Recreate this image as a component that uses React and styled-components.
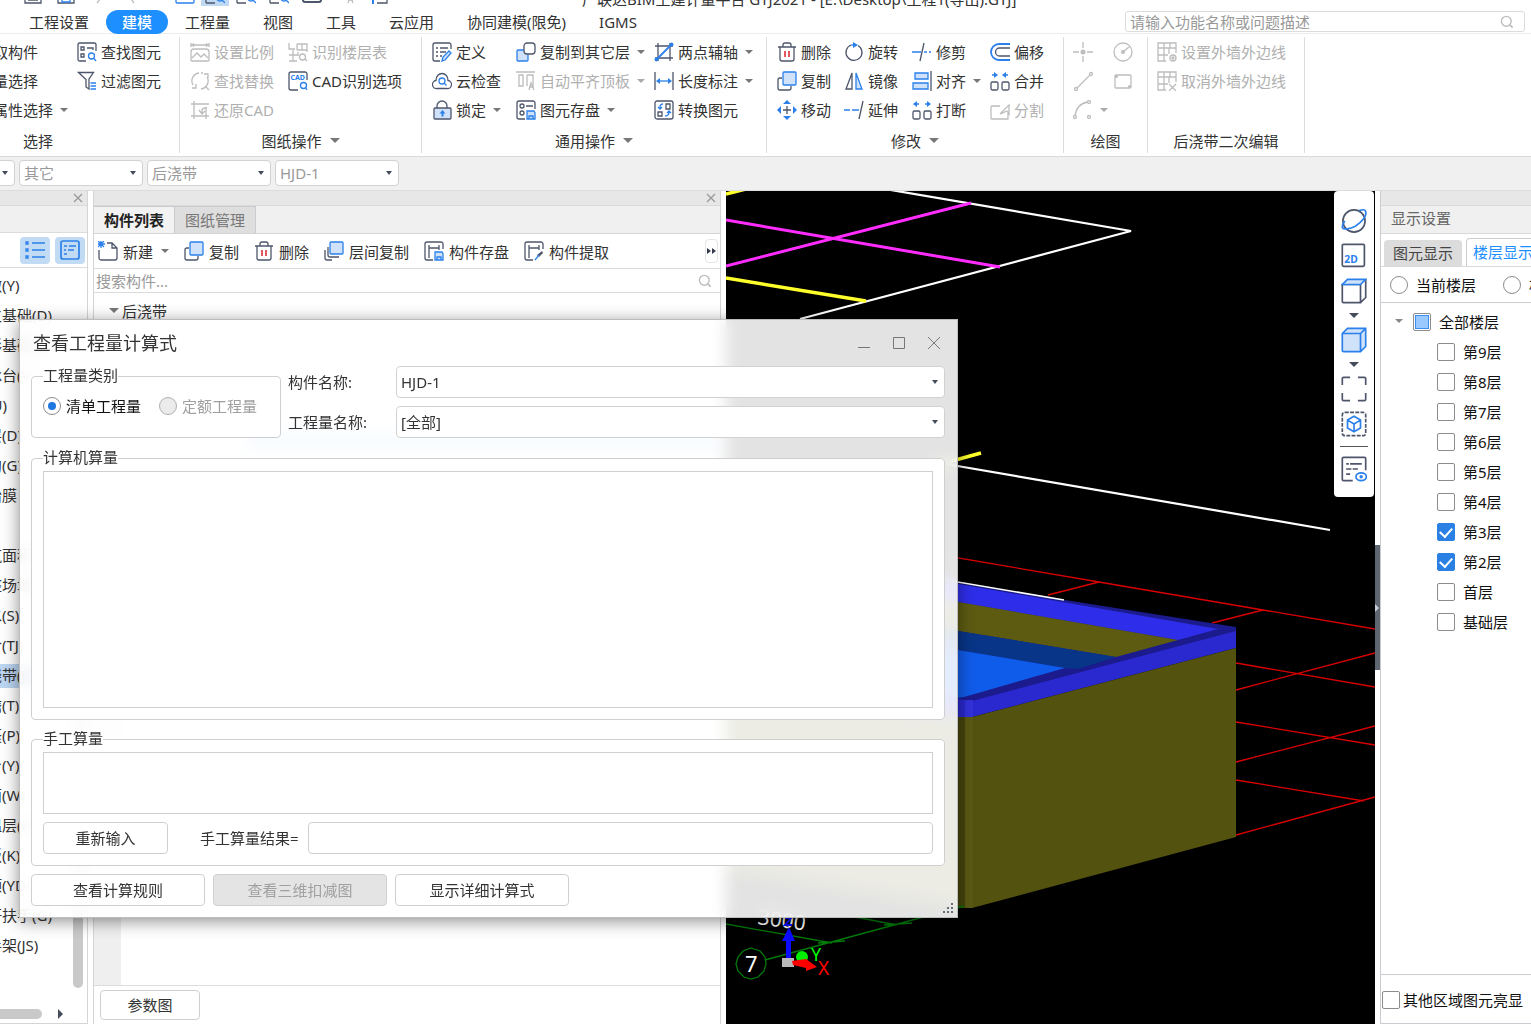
import React, { useEffect, useRef, useState } from "react";
import styled, { createGlobalStyle } from "styled-components";

const GlobalStyle = createGlobalStyle`
  * {
    box-sizing: border-box;
  }
  body {
    margin: 0;
    overflow: hidden;
  }
  body, button, input, select, textarea {
    font-family: "Noto Sans", "Noto Sans CJK SC", sans-serif;
    font-size: 15px;
    color: #333;
  }
  button {
    padding: 0;
    border: none;
    background-color: transparent;
    white-space: nowrap;
  }
`;

const Page = styled.div`
  display: flex;
  flex-direction: column;
  height: 100vh;
  overflow: hidden;
  background-color: white;
`;

/* icons, all drawn on a 20x20 grid */
const IconSvg = styled.svg`
  flex: none;
  fill: none;
  stroke: currentColor;
  stroke-width: 1.3;
  color: ${(p) => (p.$off ? "#bdbdbd" : "#4d566b")};
  .a {
    stroke: ${(p) => (p.$off ? "currentColor" : "#2b80ea")};
  }
  .f {
    fill: ${(p) => (p.$off ? "none" : "#cfe2fa")};
  }
  .s {
    fill: currentColor;
    stroke: none;
  }
  .as {
    fill: ${(p) => (p.$off ? "currentColor" : "#2b80ea")};
    stroke: none;
  }
  .r {
    stroke: #e0202c;
  }
`;

const brick = (
  <path d="M9 19H1V1h18v10M1 6h18M1 13h10M7 1v5M12 6v6M13 1v5M7 6v13" />
);

const icons = {
  find: (
    <>
      <path d="M19 9V2.500a1.500 1.500 0 0 0-1.500-1.500h-15A1.500 1.500 0 0 0 1 2.500v15A1.500 1.500 0 0 0 2.500 19H9M4 5h3v3H4zM10 6h6v2M4 12h3v3H4z" />
      <circle className="a" cx="14.500" cy="14" r="3" />
      <path className="a" d="M17 16.500 19 19" />
    </>
  ),
  filter: (
    <>
      <path d="M1.500 1.500h15L12 8v10l-3-2V8.500z" />
      <path className="a" d="M13.500 12H19M13.500 15H19M13.500 18H19" />
    </>
  ),
  scale: (
    <path d="M1 1v4M19 1v4M1 3h18M4 1.500 2 3l2 1.500M16 1.500 18 3l-2 1.500M4 7h12a3 3 0 0 1 3 3v8a1 1 0 0 1-1 1H2a1 1 0 0 1-1-1v-8a3 3 0 0 1 3-3zM2 16l5-5 4 4 3-3 4 4" />
  ),
  replace: (
    <path d="M9 2a8 8 0 0 0-6 12M2 17h4v-4M11 18a8 8 0 0 0 6-12M14 3l4 0v4M15 15l4 4M13 2l-2 0" />
  ),
  restore: <path d="M4 1v18M16 7v12M1 4h18M1 16h18M17 8h-2a3 3 0 0 0-3 3v2M9 10l3 4 3-3" />,
  floors: (
    <>
      <path d="M1 1v6h6M9 2h10v8M14 2v6M9 8h10M9 2v6M5 8v11M1 13h9M1 19h8M10 10v4" />
      <circle cx="14.500" cy="15" r="3" />
      <path d="m17 17 2 2" />
    </>
  ),
  cad: (
    <>
      <path d="M19 9V3a2 2 0 0 0-2-2H3a2 2 0 0 0-2 2v14a2 2 0 0 0 2 2h7" />
      <text className="as" x="2.500" y="9" fontSize="7" fontWeight="700">
        CAD
      </text>
      <circle className="a" cx="15.500" cy="14.500" r="3" />
      <path className="a" d="m17.500 16.500 1.500 2.500" />
    </>
  ),
  define: (
    <>
      <path d="M19 7V3a2 2 0 0 0-2-2H3a2 2 0 0 0-2 2v14a2 2 0 0 0 2 2h5M4 6h2M8 6h8M4 10h2M8 10h6M4 14h2M8 14h2" />
      <path className="a f" d="m10 19 1-4 6-6 2 2-6 7z" />
    </>
  ),
  cloud: (
    <>
      <path d="M5 17.500a4 4 0 0 1-1-8C4 5 7 2.500 10 2.500s6 2.500 6 7a4 4 0 0 1-1 8z" />
      <circle className="a" cx="10" cy="10" r="3" />
      <path className="a" d="m12 12 2.500 2.500" />
    </>
  ),
  lock: (
    <>
      <path d="M5 8V6a5 5 0 0 1 10 0v2" />
      <rect className="f" x="2" y="8" width="17" height="11" rx="1" />
      <path className="a" strokeWidth="2" d="M10.500 16.500V12" />
      <path className="as" d="m10.500 10 3 3.500h-6z" />
    </>
  ),
  copyTo: (
    <>
      <rect className="a f" x="1" y="8" width="11" height="11" rx="1" />
      <rect x="8" y="1" width="11" height="11" rx="3" fill="white" />
    </>
  ),
  level: <path d="M0 1h19M3 4h4v11H3zM11 4h6v11M11 4v11M13 19l2-7 3 7M13 16h5" />,
  store: (
    <>
      <path d="M19 9V3a2 2 0 0 0-2-2H3a2 2 0 0 0-2 2v14a2 2 0 0 0 2 2h6M10 6h7" />
      <circle cx="6" cy="6" r="2" />
      <circle cx="6" cy="13" r="2" />
      <path className="a f" d="M11 11h7l1 2v6h-8zM13 19v-3h4v3" />
    </>
  ),
  axis: (
    <>
      <path d="M4 1v18M16 1v18M1 4h18M1 16h18" />
      <path className="a" strokeWidth="1.800" d="M2 18 18 2" />
      <circle className="as" cx="2.500" cy="17.500" r="2" />
      <circle className="as" cx="17.500" cy="2.500" r="2" />
    </>
  ),
  length: (
    <>
      <path d="M1 1v18M19 1v18" />
      <path className="a" d="M3 10h14" />
      <path className="as" d="m2 10 4-3v6zM18 10l-4-3v6z" />
    </>
  ),
  convert: (
    <>
      <rect x="1" y="1" width="18" height="18" rx="2" />
      <path d="M12 4h4v5h-4zM4 12h4v4H4z" />
      <path className="a" d="M9 4C6 4 6 6 6 9M4 7l2 2 2-2M11 16c3 0 4-1 4-4M13 13l2-2 2 2" />
    </>
  ),
  trash: (
    <>
      <path d="M1 5h18M3 5v12a2 2 0 0 0 2 2h10a2 2 0 0 0 2-2V5M6 5V3a2 2 0 0 1 2-2h4a2 2 0 0 1 2 2v2" />
      <path className="r" strokeWidth="1.500" d="M8 9v6M12 9v6" />
    </>
  ),
  copy: (
    <>
      <path d="M5 7H3a2 2 0 0 0-2 2v8a2 2 0 0 0 2 2h9a2 2 0 0 0 2-2v-2" />
      <rect className="a f" x="6" y="1" width="13" height="13" rx="1" />
    </>
  ),
  layerCopy: (
    <>
      <path d="M4 6v8a2 2 0 0 0 2 2h9M1 9v8a2 2 0 0 0 2 2h5" />
      <rect className="a f" x="6" y="1" width="13" height="12" rx="1" />
    </>
  ),
  move: (
    <>
      <path d="M6 10h8M10 6v8" />
      <path className="as" d="m10 0 4 4H6zM10 20l4-4H6zM0 10l4-4v8zM20 10l-4-4v8z" />
    </>
  ),
  rotate: (
    <>
      <path d="M14 3.500A8 8 0 1 1 7 3" />
      <path className="as" d="M9 0v6l5-3z" />
      <path className="a" d="M7 3h3" />
    </>
  ),
  mirror: (
    <>
      <path d="M8 2v16H2z" />
      <path className="a f" d="M12 2v16h6z" />
    </>
  ),
  trim: (
    <>
      <path d="m12 1-4 18" />
      <path className="a" strokeWidth="1.700" d="M0 10h9M12 10h3M17 10h2" />
    </>
  ),
  extend: (
    <>
      <path d="m19 1-4 18" />
      <path className="a" strokeWidth="1.700" d="M0 10h6M8 10h7" />
    </>
  ),
  align: (
    <>
      <path d="M19 0v20" />
      <path className="a f" d="M3 2h13v6H3zM1 12h15v6H1z" />
    </>
  ),
  offset: (
    <>
      <path className="a" strokeWidth="1.800" d="M20 2H9a8 8 0 0 0 0 16h11" />
      <path d="M20 6H9.500a4 4 0 0 0 0 8H20" />
    </>
  ),
  merge: (
    <>
      <rect x="1" y="11" width="7" height="8" rx="1.500" />
      <rect x="12" y="11" width="7" height="8" rx="1.500" />
      <path className="a" d="M2 4h4M18 4h-4" />
      <path className="as" d="m8 4-4-3v6zM12 4l4-3v6z" />
    </>
  ),
  split: (
    <>
      <rect x="1" y="11" width="7" height="8" rx="1.500" />
      <rect x="12" y="11" width="7" height="8" rx="1.500" />
      <path className="a" d="M4 4h3M16 4h-3" />
      <path className="as" d="m1 4 4-3v6zM19 4l-4-3v6z" />
    </>
  ),
  cut: <path d="M10 6H2a1 1 0 0 0-1 1v11a1 1 0 0 0 1 1h16v-6M10 14l9-9v9l-2-3zM10 14l3-1" />,
  point: (
    <>
      <path d="M10 0v6M10 14v6M0 10h6M14 10h6" />
      <circle className="s" cx="10" cy="10" r="2.500" />
    </>
  ),
  circle: (
    <>
      <circle cx="10" cy="10" r="9" />
      <circle className="s" cx="10" cy="10" r="2" />
      <path d="m10 10 6-5" />
    </>
  ),
  line: (
    <>
      <path d="M4 17 17 4" />
      <circle cx="3" cy="18" r="1.500" />
      <circle cx="18" cy="3" r="1.500" />
    </>
  ),
  rect: (
    <>
      <rect x="2" y="4" width="16" height="13" rx="1" />
      <circle className="s" cx="3.500" cy="5.500" r="1.500" />
      <circle className="s" cx="16.500" cy="15.500" r="1.500" />
    </>
  ),
  arc: (
    <>
      <path d="M2 16C3 8 8 3 15 2" />
      <circle cx="2" cy="17" r="1.500" />
      <circle cx="16" cy="2" r="1.500" />
      <circle cx="16" cy="17" r="1.500" />
    </>
  ),
  wallSet: (
    <>
      {brick}
      <circle cx="16" cy="16" r="3" />
      <circle cx="16" cy="16" r="1" />
    </>
  ),
  wallOff: (
    <>
      {brick}
      <path d="m12 13 7 7M19 13l-7 7" />
    </>
  ),
  create: (
    <>
      <path d="M9 2h5l5 5v10a2 2 0 0 1-2 2H3a2 2 0 0 1-2-2V9M14 2v5h5" />
      <path className="a" d="M0 0l6 6M6 0 0 6M3 0v7M0 3h7" />
    </>
  ),
  partStore: (
    <>
      <path d="M19 8V3a2 2 0 0 0-2-2H3a2 2 0 0 0-2 2v14a2 2 0 0 0 2 2h6M5 4v13M5 7h10M15 4v5" />
      <path className="a f" d="M11 11h7l1 2v6h-8zM13 19v-3h4v3" />
    </>
  ),
  partTake: (
    <>
      <path d="M19 8V3a2 2 0 0 0-2-2H3a2 2 0 0 0-2 2v14a2 2 0 0 0 2 2h6M5 4v13M5 7h10M15 4v5" />
      <path className="s" d="m13 14 5-4 1 2-4 4z" />
      <path className="a" d="m11 19 4-5" />
    </>
  ),
  list: (
    <>
      <path className="a" d="M7 3h13M7 10h13M7 17h13" />
      <path className="a" d="M1 2h2v2H1zM1 9h2v2H1zM1 16h2v2H1z" />
    </>
  ),
  card: (
    <>
      <rect className="a" x="1" y="1" width="18" height="18" rx="2" strokeWidth="1.700" />
      <path className="a" d="M4 6h3M9 6h7M4 10h2M8 10h6M4 14h3" />
    </>
  ),
  search: (
    <>
      <circle cx="9" cy="9" r="7" strokeWidth="2" />
      <path d="m14 14 4 4" strokeWidth="2.500" />
    </>
  ),
  orbit: (
    <>
      <circle cx="10" cy="10" r="8.500" />
      <path className="a" d="M14 2c3-1 5-1 5 1 1 3-3 8-8 11-4 2-9 3-10 1 0-1 0-3 2-5" />
    </>
  ),
  two: (
    <>
      <rect x="1" y="1" width="17" height="17" rx="1" />
      <text className="as" x="2.500" y="15.500" fontSize="8" fontWeight="700">
        2D
      </text>
    </>
  ),
  cubeTop: (
    <>
      <path d="M1 5h14v14H2a1 1 0 0 1-1-1zM15 19l4-4V1" />
      <path className="a f" d="M1 5l4-4h14l-4 4z" />
    </>
  ),
  cube: <path className="a f" d="M1 5l4-4h14v14l-4 4H2a1 1 0 0 1-1-1zM1 5h14v14M15 5l4-4" />,
  corners: <path d="M1 7V2a1 1 0 0 1 1-1h5M13 1h5a1 1 0 0 1 1 1v5M19 13v5a1 1 0 0 1-1 1h-5M7 19H2a1 1 0 0 1-1-1v-5" />,
  isolate: (
    <>
      <rect x="1" y="1" width="18" height="18" rx="2" strokeDasharray="3 1" />
      <path className="a" d="m10 4 5 3v6l-5 3-5-3V7zM5 7l5 3 5-3M10 10v6" />
    </>
  ),
  listEye: (
    <>
      <path d="M19 11V2a1 1 0 0 0-1-1H2a1 1 0 0 0-1 1v16a1 1 0 0 0 1 1h7M4 6h2M7 6h9M4 10h4M9 10h4M4 14h3" />
      <ellipse className="a" cx="15.500" cy="16" rx="4" ry="3" />
      <circle className="as" cx="15.500" cy="16" r="1.300" />
    </>
  ),
  save: <path d="M2 1h16v18H2zM5 16h10" />,
  saveBlue: (
    <>
      <path d="M2 1h16v18H2z" />
      <path className="a" d="M6 14h8v4H6z" />
    </>
  ),
  slash: <path d="m8 19 6-8" />,
  backslash: <path d="m6 11 6 8" />,
  screen: (
    <>
      <rect className="a" x="1" y="2" width="18" height="17" rx="1" />
      <path className="a" d="M5 15h10" />
    </>
  ),
  chart: (
    <>
      <path d="M1 19h9M1 8v11M6 10v6M9 10v6" />
      <circle className="a" cx="15" cy="14" r="3" />
      <path className="a" d="m17 16 3 3" />
    </>
  ),
  tray: <path strokeWidth="2" d="M1 10v6a2 2 0 0 0 2 2h14a2 2 0 0 0 2-2v-6" />,
  plus: (
    <>
      <path d="M9 19h10V10" />
      <path className="a" strokeWidth="2" d="M0 15h10M5 10v10M13 15h5" />
    </>
  ),
};

function Icon({ name, size = 20, off }) {
  return (
    <IconSvg width={size} height={size} viewBox="0 0 20 20" $off={off} aria-hidden="true">
      {icons[name]}
    </IconSvg>
  );
}

const Arrow = styled.span`
  flex: none;
  width: 0;
  height: 0;
  border: ${(p) => p.$size || 4}px solid transparent;
  border-top-color: ${(p) => p.$color || "#777"};
  border-bottom-width: 0;
`;

/* window title and menus */
const TitleBar = styled.header`
  display: flex;
  align-items: flex-end;
  height: 10px;
  padding-left: 16px;
  overflow: hidden;
`;
const Quick = styled.span`
  flex: none;
  display: flex;
  justify-content: center;
  width: 33px;
  padding-bottom: 6px;
`;
const QuickMark = styled.span`
  background-color: #bfd9f2;
  padding: 0 4px;
  height: 22px;
  margin-bottom: 4px;
`;
const QuickGap = styled.span`
  flex: none;
  width: 20px;
`;
const WindowTitle = styled.div`
  flex: none;
  line-height: 22px;
  margin-left: 188px;
`;
const MenuBar = styled.nav`
  display: flex;
  align-items: center;
  gap: 1px;
  height: 24px;
  padding: 0 6px 0 13px;
  border-bottom: 1px solid #ececec;
`;
const MenuButton = styled.button`
  height: 24px;
  line-height: 24px;
  padding: 0 16px;
  border-radius: 12px;
  color: ${(p) => (p.$active ? "white" : "#333")};
  background-color: ${(p) => (p.$active ? "#1e8fff" : "transparent")};
  font-weight: ${(p) => (p.$active ? 500 : 400)};
`;
const HelpSearch = styled.div`
  display: flex;
  align-items: center;
  width: 400px;
  height: 21px;
  margin-left: auto;
  padding: 0 10px 0 4px;
  border: 1px solid #dcdcdc;
  border-radius: 3px;
`;
const BareInput = styled.input`
  flex: 1;
  min-width: 0;
  height: 19px;
  padding: 0;
  border: none;
  outline: none;
  background-color: transparent;
  &::placeholder {
    color: #999;
    opacity: 1;
  }
`;

/* ribbon */
const Ribbon = styled.div`
  height: 123px;
  padding-top: 3px;
  overflow: hidden;
  border-bottom: 1px solid #d9d9d9;
`;
const RibbonTrack = styled.div`
  display: flex;
  margin-left: -103px;
`;
const Group = styled.section`
  flex: none;
  width: ${(p) => p.$width}px;
  height: 116px;
  border-right: 1px solid #dcdcdc;
`;
const GroupBody = styled.div`
  display: grid;
  grid-auto-flow: column;
  grid-template-rows: repeat(3, 29px);
  grid-template-columns: ${(p) => p.$cols};
  padding-left: ${(p) => p.$pad}px;
`;
const Tool = styled.button`
  grid-column: ${(p) => p.$col || "auto"};
  display: flex;
  align-items: center;
  gap: ${(p) => p.$gap || 4}px;
  color: ${(p) => (p.disabled ? "#b0b0b0" : "#333")};
  ${Arrow} {
    margin-left: 3px;
  }
`;
const GroupLabel = styled.div`
  display: flex;
  align-items: center;
  justify-content: center;
  gap: 8px;
  height: 32px;
`;

const groups = [
  {
    label: "选择",
    width: 283,
    pad: 57,
    cols: "123px auto",
    tools: [
      ["find", "拾取构件", 1],
      ["find", "批量选择", 1],
      ["find", "按属性选择", 1, "arrow"],
      ["find", "查找图元", 2],
      ["filter", "过滤图元", 2],
    ],
  },
  {
    label: "图纸操作",
    arrow: true,
    width: 242,
    pad: 10,
    cols: "98px auto",
    tools: [
      ["scale", "设置比例", 1, "off"],
      ["replace", "查找替换", 1, "off"],
      ["restore", "还原CAD", 1, "off"],
      ["floors", "识别楼层表", 2, "off"],
      ["cad", "CAD识别选项", 2],
    ],
  },
  {
    label: "通用操作",
    arrow: true,
    width: 345,
    pad: 10,
    cols: "84px 138px auto",
    tools: [
      ["define", "定义", 1],
      ["cloud", "云检查", 1],
      ["lock", "锁定", 1, "arrow"],
      ["copyTo", "复制到其它层", 2, "arrow"],
      ["level", "自动平齐顶板", 2, "off arrow"],
      ["store", "图元存盘", 2, "arrow"],
      ["axis", "两点辅轴", 3, "arrow"],
      ["length", "长度标注", 3, "arrow"],
      ["convert", "转换图元", 3],
    ],
  },
  {
    label: "修改",
    arrow: true,
    width: 297,
    pad: 10,
    cols: "67px 68px 78px auto",
    tools: [
      ["trash", "删除", 1],
      ["copy", "复制", 1],
      ["move", "移动", 1],
      ["rotate", "旋转", 2],
      ["mirror", "镜像", 2],
      ["extend", "延伸", 2],
      ["trim", "修剪", 3],
      ["align", "对齐", 3, "arrow"],
      ["split", "打断", 3],
      ["offset", "偏移", 4],
      ["merge", "合并", 4],
      ["cut", "分割", 4, "off"],
    ],
  },
  {
    label: "绘图",
    width: 84,
    pad: 9,
    cols: "40px auto",
    iconOnly: true,
    tools: [
      ["point", "点", 1, "off"],
      ["line", "直线", 1, "off"],
      ["arc", "弧", 1, "off arrow"],
      ["circle", "圆", 2, "off"],
      ["rect", "矩形", 2, "off"],
    ],
  },
  {
    label: "后浇带二次编辑",
    width: 157,
    pad: 9,
    cols: "auto",
    tools: [
      ["wallSet", "设置外墙外边线", 1, "off"],
      ["wallOff", "取消外墙外边线", 1, "off"],
    ],
  },
];

/* combo boxes, shared by the filter bar and the dialog */
const Combo = styled.div`
  flex: ${(p) => (p.$width ? "none" : "1")};
  width: ${(p) => (p.$width ? `${p.$width}px` : "auto")};
  display: grid;
  align-items: center;
  justify-items: end;
  height: ${(p) => p.$height}px;
  border: 1px solid #d2d2d2;
  border-radius: 4px;
  background-color: white;
  select {
    grid-area: 1 / 1;
    width: 100%;
    height: 100%;
    padding: 0 4px;
    border: none;
    outline: none;
    appearance: none;
    background-color: transparent;
    color: ${(p) => (p.$muted ? "#999" : "#333")};
  }
  ${Arrow} {
    grid-area: 1 / 1;
    margin-right: 6px;
    border-width: 4px 3px 0 3px;
    pointer-events: none;
  }
`;
const FilterBar = styled.div`
  display: flex;
  align-items: center;
  gap: 3px;
  height: 33px;
  padding-bottom: 1px;
  background-color: #f0f0f0;
  overflow: hidden;
`;
const FilterTrack = styled.div`
  display: flex;
  gap: 4px;
  margin-left: -109px;
`;

function Select({ label, id, value, width, height, muted }) {
  return (
    <Combo $width={width} $height={height} $muted={muted}>
      <select id={id} aria-label={label} defaultValue={value}>
        <option>{value}</option>
      </select>
      <Arrow $color="#444c5c" />
    </Combo>
  );
}

/* docked panels */
const Workspace = styled.main`
  flex: 1;
  min-height: 0;
  display: flex;
  padding-bottom: 2px;
  border-top: 1px solid #dcdcdc;
`;
const PanelGrip = styled.div`
  flex: none;
  display: flex;
  align-items: center;
  justify-content: flex-end;
  height: 15px;
  padding-right: 4px;
  background-color: #e7e7e7;
  border-bottom: 1px solid #dadada;
`;
const CloseX = styled.button`
  display: flex;
  svg {
    width: 10px;
    height: 10px;
    stroke: #999;
    stroke-width: 1.3;
    fill: none;
  }
`;
const Sidebar = styled.aside`
  flex: none;
  display: flex;
  flex-direction: column;
  width: 88px;
  margin-right: 5px;
  border-right: 1px solid #d5d5d5;
  border-bottom: 1px solid #d5d5d5;
  overflow: hidden;
`;
const SidebarHead = styled.div`
  flex: none;
  height: 27px;
  background-color: #f0f0f0;
  border-bottom: 1px solid #dcdcdc;
`;
const SidebarTools = styled.div`
  flex: none;
  display: flex;
  justify-content: flex-end;
  align-items: center;
  gap: 5px;
  height: 35px;
  padding-right: 2px;
  border-bottom: 1px solid #dcdcdc;
`;
const ToggleButton = styled.button`
  display: flex;
  align-items: center;
  justify-content: center;
  width: 30px;
  height: 27px;
  border-radius: 4px;
  background-color: #c1dbf5;
`;
const SidebarBody = styled.div`
  flex: 1;
  min-height: 0;
  display: flex;
`;
const NavList = styled.ul`
  flex: 1;
  min-width: 0;
  margin: 0;
  padding: 3px 0 0 0;
  list-style: none;
  overflow: hidden;
`;
const NavItem = styled.li`
  height: 30px;
  padding: 3px 0;
  div {
    height: 24px;
    line-height: 22px;
    text-indent: -28px;
    white-space: nowrap;
    background-color: ${(p) => (p.$active ? "#bcd6f2" : "transparent")};
  }
`;
const VScroll = styled.div`
  display: flex;
  align-items: flex-end;
  width: 14px;
  padding-bottom: 2px;
`;
const HScroll = styled.div`
  flex: none;
  display: flex;
  align-items: center;
  gap: 16px;
  height: 33px;
  padding-top: 14px;
`;
const Thumb = styled.div`
  width: ${(p) => p.$w}px;
  height: ${(p) => p.$h};
  border-radius: ${(p) => p.$radius};
  background-color: #c9c9c9;
`;
const RightArrow = styled.span`
  border: 5px solid transparent;
  border-left-color: #444c5c;
  border-right-width: 0;
`;

const navItems = [
  "柱墩(Y)",
  "独立基础(D)",
  "条形基础(T)",
  "桩承台(V)",
  "桩(U)",
  "垫层(D)",
  "地沟(G)",
  "砖胎膜",
  "",
  "建筑面积(U)",
  "平整场地(V)",
  "散水(S)",
  "台阶(TJ)",
  "后浇带(JD)",
  "挑檐(T)",
  "雨篷(P)",
  "阳台(Y)",
  "屋面(W)",
  "保温层(H)",
  "栏板(K)",
  "压顶(YD)",
  "栏杆扶手(G)",
  "脚手架(JS)",
];

const PartPanel = styled.section`
  flex: none;
  display: flex;
  flex-direction: column;
  width: 628px;
  margin-right: 5px;
  border: 1px solid #d5d5d5;
  border-width: 0 1px;
`;
const TabRow = styled.div`
  flex: none;
  display: flex;
  align-items: flex-end;
  height: 28px;
  background-color: #f0f0f0;
  border-bottom: 1px solid #d5d5d5;
`;
const PartTab = styled.button`
  width: 81px;
  height: 27px;
  padding-bottom: 2px;
  border: 1px solid #c8ccd0;
  border-left-width: 0;
  border-bottom: none;
  color: ${(p) => (p.$active ? "#222" : "#777")};
  font-weight: ${(p) => (p.$active ? 600 : 400)};
  background-color: ${(p) => (p.$active ? "#f2f2f2" : "#dedede")};
`;
const PartTools = styled.div`
  flex: none;
  display: flex;
  align-items: center;
  gap: 15px;
  height: 35px;
  padding: 0 2px 0 4px;
  border-bottom: 1px solid #dcdcdc;
`;
const MoreButton = styled.button`
  display: flex;
  align-items: center;
  justify-content: center;
  width: 13px;
  height: 24px;
  margin-left: auto;
  border: 1px solid #e4e4e4;
  border-radius: 4px;
`;
const PartSearch = styled.div`
  flex: none;
  display: flex;
  align-items: center;
  height: 24px;
  padding: 0 8px 0 2px;
  border-bottom: 1px solid #dcdcdc;
`;
const PartTree = styled.div`
  flex: 1;
  min-height: 0;
  border-bottom: 1px solid #dcdcdc;
  background: linear-gradient(to right, #efefef 27px, transparent 27px) no-repeat 0 100% / 100% 75%;
`;
const TreeRoot = styled.div`
  display: flex;
  align-items: center;
  gap: 3px;
  height: 34px;
  padding-left: 15px;
`;
const TreeMark = styled.div`
  height: 20px;
  margin: 104px 0 0 150px;
  background-color: #b9d9fb;
`;
const PartFoot = styled.div`
  flex: none;
  display: flex;
  align-items: center;
  height: 38px;
  padding-left: 6px;
`;
const PushButton = styled.button`
  width: ${(p) => p.$width}px;
  height: ${(p) => p.$height || 32}px;
  padding-bottom: 2px;
  border: 1px solid #cfcfcf;
  border-radius: 4px;
  color: ${(p) => (p.disabled ? "#a0a0a0" : "#333")};
  background-color: ${(p) => (p.disabled ? "#e4e4e4" : "white")};
`;

/* 3d view */
const Viewport = styled.section`
  flex: 1;
  min-width: 0;
  position: relative;
  background-color: black;
`;
const Scene = styled.svg`
  display: block;
  width: 100%;
  height: 100%;
`;
const ViewTools = styled.div`
  position: absolute;
  top: 0;
  right: 1px;
  display: flex;
  flex-direction: column;
  align-items: center;
  gap: 9px;
  width: 40px;
  padding: 17px 0 15px 0;
  border-radius: 4px;
  background-color: white;
  button {
    display: flex;
  }
  hr {
    width: 28px;
    margin: 0;
    border: none;
    border-top: 1px solid #555;
  }
`;
const Splitter = styled.div`
  flex: none;
  display: flex;
  align-items: center;
  width: 5px;
`;
const SplitterHandle = styled.button`
  display: flex;
  align-items: center;
  width: 5px;
  height: 125px;
  background-color: #5e6672;
  span {
    border: 4px solid transparent;
    border-left-color: #c8ccd2;
    border-right-width: 0;
  }
`;

/* display settings */
const DisplayPanel = styled.aside`
  flex: none;
  display: flex;
  flex-direction: column;
  width: 151px;
  border: 1px solid #c9cdd2;
  border-width: 0 0 1px 1px;
  overflow: hidden;
`;
const DisplayTitle = styled.div`
  flex: none;
  height: 28px;
  line-height: 25px;
  padding-left: 10px;
  color: #666;
  background-color: #f0f0f0;
  border-bottom: 1px solid #d9d9d9;
`;
const DisplayTabs = styled.div`
  flex: none;
  display: flex;
  align-items: flex-end;
  gap: 4px;
  height: 32px;
  padding-left: 3px;
`;
const DisplayTab = styled.button`
  flex: none;
  width: ${(p) => (p.$active ? 74 : 78)}px;
  height: ${(p) => (p.$active ? 28 : 26)}px;
  padding-bottom: 2px;
  border: ${(p) => (p.$active ? "1px solid #c9cdd2" : "none")};
  border-bottom: none;
  border-radius: 4px 4px 0 0;
  color: ${(p) => (p.$active ? "#1e8fff" : "#444")};
  background-color: ${(p) => (p.$active ? "white" : "#dcdcdc")};
`;
const DisplayRadios = styled.div`
  flex: none;
  display: flex;
  align-items: center;
  gap: 27px;
  height: 37px;
  padding-left: 9px;
  border-top: 1px solid #d9d9d9;
  border-bottom: 1px solid #c9cdd2;
`;
const Choice = styled.label`
  flex: none;
  display: flex;
  align-items: center;
  gap: ${(p) => p.$gap}px;
  color: ${(p) => (p.$off ? "#a0a0a0" : "#111")};
  white-space: nowrap;
`;
const Radio = styled.input`
  flex: none;
  display: grid;
  place-content: center;
  width: 18px;
  height: 18px;
  margin: 0;
  appearance: none;
  border: 1px solid #8c8c8c;
  border-radius: 50%;
  background-color: white;
  &:disabled {
    border-color: #b0b0b0;
    background-color: #ebebeb;
  }
  &:checked::after {
    content: "";
    width: 8px;
    height: 8px;
    border-radius: 50%;
    background-color: #1f77e0;
  }
`;
const Check = styled.input`
  flex: none;
  display: grid;
  place-content: center;
  width: 18px;
  height: 18px;
  margin: 2px 0 0 0;
  appearance: none;
  border: 1px solid #8c8c8c;
  border-radius: 2px;
  background-color: white;
  &:checked {
    border-color: #2b80e4;
    background-color: #2b80e4;
  }
  &:checked::after {
    content: "";
    width: 6px;
    height: 10px;
    margin-bottom: 3px;
    border: solid white;
    border-width: 0 2px 2px 0;
    transform: rotate(42deg);
  }
  &:indeterminate::after {
    content: "";
    width: 12px;
    height: 12px;
    border: 1px solid #3b8df0;
    background-color: #99c9ff;
  }
`;
const FloorTree = styled.ul`
  flex: 1;
  margin: 0;
  padding: 3px 0 0 0;
  list-style: none;
`;
const FloorRow = styled.li`
  display: flex;
  align-items: center;
  gap: 10px;
  height: 30px;
  padding-left: ${(p) => (p.$root ? 14 : 56)}px;
`;
const DisplayFoot = styled.div`
  flex: none;
  display: flex;
  align-items: center;
  height: 49px;
  padding-left: 1px;
  border-top: 1px solid #c9cdd2;
`;

/* quantity dialog, floats over the workspace */
const Dialog = styled.div`
  position: absolute;
  left: 19px;
  top: 319px;
  width: 939px;
  display: flex;
  flex-direction: column;
  padding: 0 12px 11px 11px;
  border: 1px solid #bdbdbd;
  background-color: rgba(255, 255, 255, 0.89);
  backdrop-filter: blur(8px);
  box-shadow: 0 3px 16px rgba(0, 0, 0, 0.45);
`;
const DialogHead = styled.div`
  display: flex;
  align-items: center;
  height: 45px;
  padding-left: 2px;
  h1 {
    flex: 1;
    margin: 0;
    font-size: 18px;
    line-height: 24px;
    font-weight: 400;
  }
`;
const WindowButton = styled.button`
  display: flex;
  justify-content: center;
  width: 35px;
  svg {
    width: 14px;
    height: 14px;
    stroke: #777;
    fill: none;
  }
`;
const WindowButtons = styled.div`
  display: flex;
  margin-right: -6px;
`;
const DialogTop = styled.div`
  display: flex;
  gap: 7px;
  margin-bottom: 9px;
`;
const Box = styled.fieldset`
  min-width: 0;
  width: ${(p) => (p.$width ? `${p.$width}px` : "auto")};
  margin: 0 0 ${(p) => p.$after || 0}px 0;
  padding: 0 11px 11px 11px;
  border: 1px solid #cfcfcf;
  border-radius: 4px;
  background-color: white;
  legend {
    height: 22px;
    line-height: 20px;
    padding: 0;
  }
`;
const RadioRow = styled.div`
  display: flex;
  gap: 18px;
  padding-top: 8px;
`;
const Fields = styled.div`
  flex: 1;
  display: flex;
  flex-direction: column;
  gap: 8px;
  padding-top: 1px;
`;
const Field = styled.div`
  display: flex;
  align-items: center;
  label {
    width: 108px;
    padding-bottom: 2px;
  }
`;
const TextBox = styled.textarea`
  display: block;
  width: 100%;
  height: ${(p) => p.$height}px;
  margin-top: 2px;
  border: 1px solid #cfcfcf;
  background-color: white;
  outline: none;
  resize: none;
`;
const ResultRow = styled.div`
  display: flex;
  align-items: center;
  padding-top: 8px;
  label {
    margin: 0 9px 0 32px;
    padding-bottom: 2px;
  }
`;
const ResultInput = styled.input`
  flex: 1;
  min-width: 0;
  height: 32px;
  border: 1px solid #cfcfcf;
  border-radius: 4px;
  outline: none;
`;
const DialogFoot = styled.div`
  display: flex;
  align-items: flex-end;
  gap: 8px;
`;
const Grip = styled.svg`
  width: 11px;
  height: 11px;
  margin: 0 -9px -8px auto;
  fill: #666e7c;
`;

function RibbonGroup({ group }) {
  return (
    <Group $width={group.width}>
      <GroupBody $pad={group.pad} $cols={group.cols}>
        {group.tools.map(([icon, text, col, flags = ""]) => {
          const off = flags.includes("off");
          return (
            <Tool key={text} $col={col} disabled={off} aria-label={text}>
              <Icon name={icon} off={off} />
              {!group.iconOnly && text}
              {flags.includes("arrow") && <Arrow $color={off ? "#aaa" : "#777"} />}
            </Tool>
          );
        })}
      </GroupBody>
      <GroupLabel>
        {group.label}
        {group.arrow && <Arrow $size={5} />}
      </GroupLabel>
    </Group>
  );
}

function Close() {
  return (
    <CloseX aria-label="关闭">
      <svg viewBox="0 0 10 10">
        <path d="m1 1 8 8M9 1 1 9" />
      </svg>
    </CloseX>
  );
}

function Model() {
  return (
    <Scene viewBox="726 191 649 833" preserveAspectRatio="xMinYMin slice">
      <g fill="none" stroke="white" strokeWidth="2.200">
        <path d="M885 189 1131 231 800 319M940 463 1330 530" />
      </g>
      <g fill="none" stroke="#ff2cff" strokeWidth="3">
        <path d="M726 220 1000 267M726 266 971 203" />
      </g>
      <g fill="none" stroke="#ffff2c" strokeWidth="3.500">
        <path d="M726 278 866 301M726 194 746 189M930 467 981 453" />
      </g>
      <g fill="none" stroke="#d80000" strokeWidth="1.300">
        <path d="M900 548 1099 582 1263 610 1375 629M1099 582 1048 595M1263 610 1212 623" />
        <path d="M1236 663 1375 687M1375 653 1236 690M1236 722 1375 745M1375 726 1236 762" />
        <path d="M1236 780 1364 801M1375 797 1236 835" />
      </g>
      <path fill="#1b1b8e" d="M726 544 958 583 1236 627V632L972 702 726 670z" />
      <path fill="#2e2eea" d="M726 545 958 584 1218 629 1178 640 958 602 726 564z" />
      <path fill="#5d5b12" d="M726 564 958 602 1178 640 1116 657 958 631 726 592z" />
      <path fill="#083587" d="M726 592 958 631 1116 657 1078 669 1065 668 958 650 726 611z" />
      <path fill="#105cea" d="M726 611 958 650 1065 668 964 697 958 698 726 660z" />
      <path fill="#2a28cf" d="M958 699 972 701 1236 631V648L972 717H958L726 680V662z" />
      <path fill="#53520f" d="M972 717 1236 648V837L972 908H965L726 870V680L958 717z" />
      <path fill="#46450b" d="M958 717h7v191h-7z" />
      <path fill="#5b5a14" d="M965 717h8v191h-8z" />
      <path fill="#3232dc" d="M965 700h8v17h-8z" />
      <path stroke="white" strokeWidth="1.600" d="M940 579 1064 600" />
      <g fill="none" stroke="#007a08" strokeWidth="1.300">
        <path d="M964 906 765 960M726 924 832 943M818 943 845 941M850 916 897 925M884 925 912 923" />
        <path d="m751 948 9 3 5 6 1 7-2 7-6 6-7 2-7-2-6-6-2-7 2-7 5-6z" />
      </g>
      <text x="757" y="924" fontSize="21" fill="white" transform="rotate(8 757 924)">
        3000
      </text>
      <text x="745" y="972" fontSize="22" fill="white">
        7
      </text>
      <path stroke="#0c0cff" strokeWidth="2" d="M785 918h6l-6 7h7" fill="none" />
      <path fill="#0c0cff" d="M786 959V941h-4l7-14 6 14h-4v18z" />
      <path fill="#b8b8b8" d="M782 958h12v9h-12z" />
      <circle cx="802" cy="957" r="6" fill="#00ee00" />
      <path fill="red" d="m792 961 14-2 11 8-11 4v-3l-13-3z" />
      <text x="811" y="961" fontSize="18" fill="#00ff00">
        Y
      </text>
      <text x="818" y="975" fontSize="19" fill="red">
        X
      </text>
    </Scene>
  );
}

function QuantityDialog() {
  return (
    <Dialog role="dialog" aria-label="查看工程量计算式">
      <DialogHead>
        <h1>查看工程量计算式</h1>
        <WindowButtons>
          <WindowButton aria-label="最小化">
            <svg viewBox="0 0 14 14">
              <path d="M1 11.500h12" />
            </svg>
          </WindowButton>
          <WindowButton aria-label="最大化">
            <svg viewBox="0 0 14 14">
              <path d="M1.500 1.500h11v11h-11z" />
            </svg>
          </WindowButton>
          <WindowButton aria-label="关闭">
            <svg viewBox="0 0 14 14">
              <path d="m1 1 12 12M13 1 1 13" />
            </svg>
          </WindowButton>
        </WindowButtons>
      </DialogHead>
      <DialogTop>
        <Box $width={250}>
          <legend>工程量类别</legend>
          <RadioRow>
            <Choice $gap={5}>
              <Radio type="radio" name="kind" defaultChecked />
              清单工程量
            </Choice>
            <Choice $gap={5} $off>
              <Radio type="radio" name="kind" disabled />
              定额工程量
            </Choice>
          </RadioRow>
        </Box>
        <Fields>
          <Field>
            <label htmlFor="part">构件名称:</label>
            <Select id="part" value="HJD-1" height={32} />
          </Field>
          <Field>
            <label htmlFor="quantity">工程量名称:</label>
            <Select id="quantity" value="[全部]" height={32} />
          </Field>
        </Fields>
      </DialogTop>
      <Box $after={8}>
        <legend>计算机算量</legend>
        <TextBox $height={237} aria-label="计算机算量" readOnly />
      </Box>
      <Box $after={8}>
        <legend>手工算量</legend>
        <TextBox $height={62} aria-label="手工算量" />
        <ResultRow>
          <PushButton $width={125}>重新输入</PushButton>
          <label htmlFor="result">手工算量结果=</label>
          <ResultInput id="result" type="text" />
        </ResultRow>
      </Box>
      <DialogFoot>
        <PushButton $width={174}>查看计算规则</PushButton>
        <PushButton $width={174} disabled>
          查看三维扣减图
        </PushButton>
        <PushButton $width={174}>显示详细计算式</PushButton>
        <Grip viewBox="0 0 11 11">
          <path d="M8 0h2v2H8zM8 4h2v2H8zM4 4h2v2H4zM8 8h2v2H8zM4 8h2v2H4zM0 8h2v2H0z" />
        </Grip>
      </DialogFoot>
    </Dialog>
  );
}

function FloorSettings() {
  const all = useRef(null);
  const names = ["第9层", "第8层", "第7层", "第6层", "第5层", "第4层", "第3层", "第2层", "首层", "基础层"];
  const [shown, setShown] = useState(["第3层", "第2层"]);

  useEffect(() => {
    all.current.indeterminate = shown.length > 0 && shown.length < names.length;
  }, [shown]);

  function toggle(name) {
    setShown(shown.includes(name) ? shown.filter((v) => v !== name) : [...shown, name]);
  }

  return (
    <DisplayPanel>
      <PanelGrip />
      <DisplayTitle>显示设置</DisplayTitle>
      <DisplayTabs>
        <DisplayTab>图元显示</DisplayTab>
        <DisplayTab $active>楼层显示</DisplayTab>
      </DisplayTabs>
      <DisplayRadios>
        <Choice $gap={8}>
          <Radio type="radio" name="floors" />
          当前楼层
        </Choice>
        <Choice $gap={8}>
          <Radio type="radio" name="floors" />
          相邻楼层
        </Choice>
      </DisplayRadios>
      <FloorTree>
        <FloorRow $root>
          <Arrow $color="#888" />
          <Choice $gap={8}>
            <Check
              type="checkbox"
              ref={all}
              checked={shown.length === names.length}
              onChange={() => setShown(shown.length === names.length ? [] : names)}
            />
            全部楼层
          </Choice>
        </FloorRow>
        {names.map((name) => (
          <FloorRow key={name}>
            <Choice $gap={8}>
              <Check type="checkbox" checked={shown.includes(name)} onChange={() => toggle(name)} />
              {name}
            </Choice>
          </FloorRow>
        ))}
      </FloorTree>
      <DisplayFoot>
        <Choice $gap={3}>
          <Check type="checkbox" />
          其他区域图元亮显
        </Choice>
      </DisplayFoot>
    </DisplayPanel>
  );
}

function App() {
  return (
    <Page>
      <GlobalStyle />
      <TitleBar>
        <Quick><Icon name="save" /></Quick>
        <Quick><Icon name="saveBlue" /></Quick>
        <Quick><Icon name="slash" off /></Quick>
        <Quick><Icon name="backslash" off /></Quick>
        <QuickGap />
        <Quick><Icon name="screen" /></Quick>
        <QuickMark><Icon name="chart" /></QuickMark>
        <Quick><Icon name="chart" /></Quick>
        <Quick><Icon name="chart" /></Quick>
        <Quick><Icon name="tray" /></Quick>
        <Quick><Icon name="level" off /></Quick>
        <Quick><Icon name="plus" /></Quick>
        <WindowTitle>广联达BIM土建计量平台 GTJ2021 - [E:\Desktop\工程1(导出).GTJ]</WindowTitle>
      </TitleBar>
      <MenuBar>
        {["工程设置", "建模", "工程量", "视图", "工具", "云应用", "协同建模(限免)", "IGMS"].map((name) => (
          <MenuButton key={name} $active={name === "建模"}>
            {name}
          </MenuButton>
        ))}
        <HelpSearch>
          <BareInput type="text" placeholder="请输入功能名称或问题描述" aria-label="搜索功能" />
          <Icon name="search" size={14} off />
        </HelpSearch>
      </MenuBar>
      <Ribbon>
        <RibbonTrack>
          {groups.map((group) => (
            <RibbonGroup key={group.label} group={group} />
          ))}
        </RibbonTrack>
      </Ribbon>
      <FilterBar>
        <FilterTrack>
          <Select label="楼层" value="" width={124} height={26} muted />
          <Select label="类别" value="其它" width={124} height={26} muted />
          <Select label="类型" value="后浇带" width={124} height={26} muted />
          <Select label="构件" value="HJD-1" width={124} height={26} muted />
        </FilterTrack>
      </FilterBar>
      <Workspace>
        <Sidebar>
          <PanelGrip>
            <Close />
          </PanelGrip>
          <SidebarHead />
          <SidebarTools>
            <ToggleButton aria-label="列表"><Icon name="list" /></ToggleButton>
            <ToggleButton aria-label="详情"><Icon name="card" /></ToggleButton>
          </SidebarTools>
          <SidebarBody>
            <NavList>
              {navItems.map((name) => (
                <NavItem key={name} $active={name === "后浇带(JD)"}>
                  <div>{name}</div>
                </NavItem>
              ))}
            </NavList>
            <VScroll>
              <Thumb $w={10} $h="60%" $radius="5px" />
            </VScroll>
          </SidebarBody>
          <HScroll>
            <Thumb $w={42} $h="10px" $radius="0 5px 5px 0" />
            <RightArrow />
          </HScroll>
        </Sidebar>
        <PartPanel>
          <PanelGrip>
            <Close />
          </PanelGrip>
          <TabRow>
            <PartTab $active>构件列表</PartTab>
            <PartTab>图纸管理</PartTab>
          </TabRow>
          <PartTools>
            <Tool $gap={5}>
              <Icon name="create" />
              新建
              <Arrow />
            </Tool>
            <Tool $gap={5}><Icon name="copy" />复制</Tool>
            <Tool $gap={5}><Icon name="trash" />删除</Tool>
            <Tool $gap={5}><Icon name="layerCopy" />层间复制</Tool>
            <Tool $gap={5}><Icon name="partStore" />构件存盘</Tool>
            <Tool $gap={5}><Icon name="partTake" />构件提取</Tool>
            <MoreButton aria-label="更多">
              <svg width="9" height="6" viewBox="0 0 9 6" fill="#333b4a">
                <path d="m0 0 4 3-4 3zM5 0l4 3-4 3z" />
              </svg>
            </MoreButton>
          </PartTools>
          <PartSearch>
            <BareInput type="text" placeholder="搜索构件..." aria-label="搜索构件" />
            <Icon name="search" size={14} off />
          </PartSearch>
          <PartTree>
            <TreeRoot>
              <Arrow $size={5} />
              后浇带
            </TreeRoot>
            <TreeMark />
          </PartTree>
          <PartFoot>
            <PushButton $width={100} $height={30}>参数图</PushButton>
          </PartFoot>
        </PartPanel>
        <Viewport>
          <Model />
          <ViewTools>
            <button aria-label="动态观察"><Icon name="orbit" size={26} /></button>
            <button aria-label="二维"><Icon name="two" size={26} /></button>
            <button aria-label="俯视"><Icon name="cubeTop" size={26} /></button>
            <Arrow $size={5} $color="#444c5c" />
            <button aria-label="实体"><Icon name="cube" size={26} /></button>
            <Arrow $size={5} $color="#444c5c" />
            <button aria-label="全屏"><Icon name="corners" size={26} /></button>
            <button aria-label="局部三维"><Icon name="isolate" size={26} /></button>
            <hr />
            <button aria-label="显示设置"><Icon name="listEye" size={26} /></button>
          </ViewTools>
        </Viewport>
        <Splitter>
          <SplitterHandle aria-label="收起面板">
            <span />
          </SplitterHandle>
        </Splitter>
        <FloorSettings />
      </Workspace>
      <QuantityDialog />
    </Page>
  );
}
export default App;
